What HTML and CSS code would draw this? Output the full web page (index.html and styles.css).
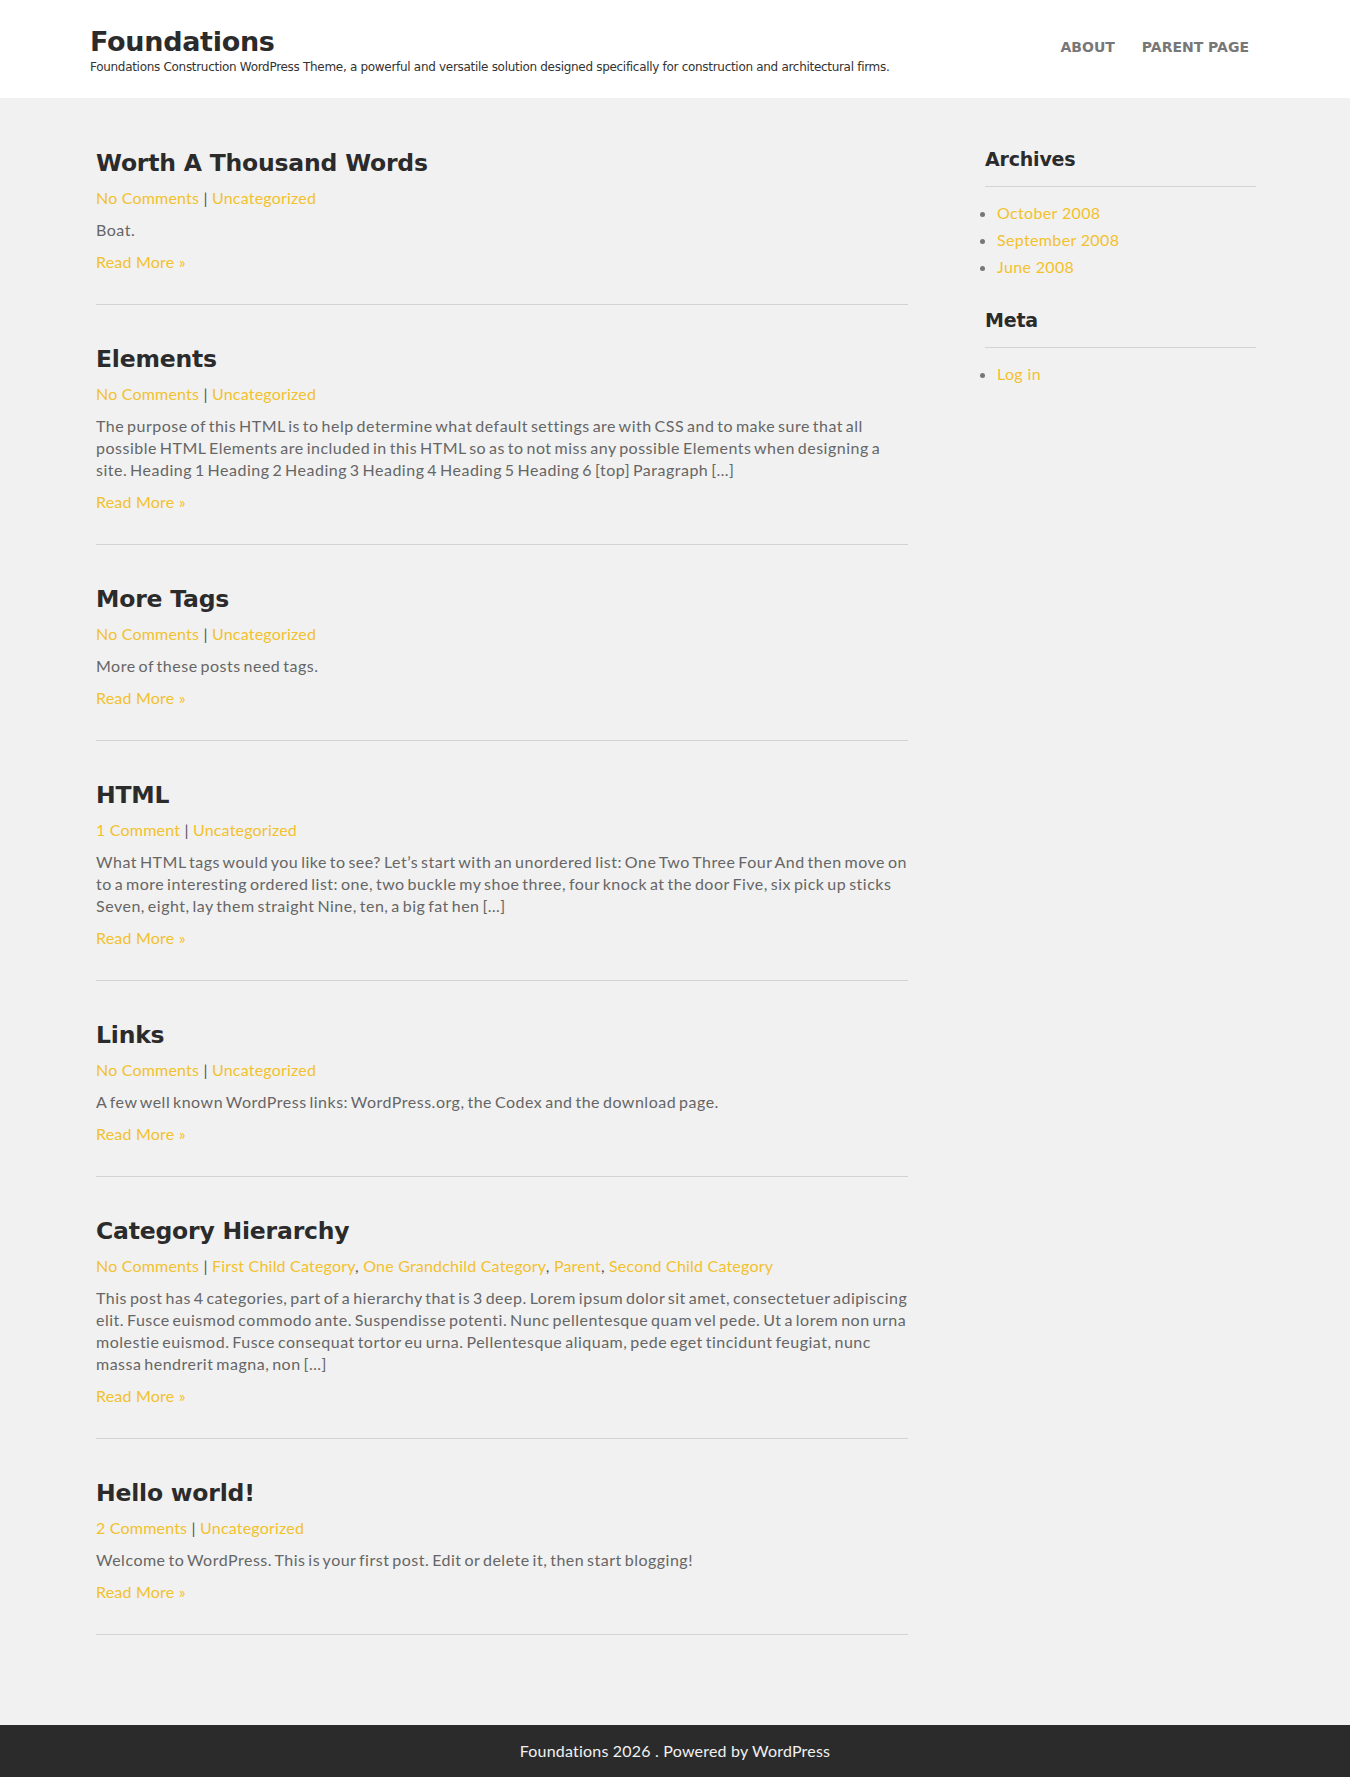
FILE: index.html
```html
<!DOCTYPE html>
<html lang="en">
<head>
<meta charset="utf-8">
<title>Foundations</title>
<link rel="stylesheet" href="styles.css">
</head>
<body>
<header class="site-header">
  <div class="header-inner">
    <div class="branding">
      <div class="site-title">Foundations</div>
      <div class="tagline">Foundations Construction WordPress Theme, a powerful and versatile solution designed specifically for construction and architectural firms.</div>
    </div>
    <nav class="main-nav">
      <a href="#">About</a>
      <a href="#">Parent Page</a>
    </nav>
  </div>
</header>

<div class="site-main">
  <main class="posts">
    <article class="post">
      <h2 class="post-title">Worth A Thousand Words</h2>
      <div class="post-meta"><a href="#">No Comments</a> | <a href="#">Uncategorized</a></div>
      <p class="excerpt">Boat.</p>
      <a class="read-more" href="#">Read More »</a>
    </article>
    <article class="post">
      <h2 class="post-title">Elements</h2>
      <div class="post-meta"><a href="#">No Comments</a> | <a href="#">Uncategorized</a></div>
      <p class="excerpt">The purpose of this HTML is to help determine what default settings are with CSS and to make sure that all possible HTML Elements are included in this HTML so as to not miss any possible Elements when designing a site. Heading 1 Heading 2 Heading 3 Heading 4 Heading 5 Heading 6 [top] Paragraph […]</p>
      <a class="read-more" href="#">Read More »</a>
    </article>
    <article class="post">
      <h2 class="post-title">More Tags</h2>
      <div class="post-meta"><a href="#">No Comments</a> | <a href="#">Uncategorized</a></div>
      <p class="excerpt">More of these posts need tags.</p>
      <a class="read-more" href="#">Read More »</a>
    </article>
    <article class="post">
      <h2 class="post-title">HTML</h2>
      <div class="post-meta"><a href="#">1 Comment</a> | <a href="#">Uncategorized</a></div>
      <p class="excerpt">What HTML tags would you like to see? Let’s start with an unordered list: One Two Three Four And then move on to a more interesting ordered list: one, two buckle my shoe three, four knock at the door Five, six pick up sticks Seven, eight, lay them straight Nine, ten, a big fat hen […]</p>
      <a class="read-more" href="#">Read More »</a>
    </article>
    <article class="post">
      <h2 class="post-title">Links</h2>
      <div class="post-meta"><a href="#">No Comments</a> | <a href="#">Uncategorized</a></div>
      <p class="excerpt">A few well known WordPress links: WordPress.org, the Codex and the download page.</p>
      <a class="read-more" href="#">Read More »</a>
    </article>
    <article class="post">
      <h2 class="post-title">Category Hierarchy</h2>
      <div class="post-meta"><a href="#">No Comments</a> | <a href="#">First Child Category</a>, <a href="#">One Grandchild Category</a>, <a href="#">Parent</a>, <a href="#">Second Child Category</a></div>
      <p class="excerpt">This post has 4 categories, part of a hierarchy that is 3 deep. Lorem ipsum dolor sit amet, consectetuer adipiscing elit. Fusce euismod commodo ante. Suspendisse potenti. Nunc pellentesque quam vel pede. Ut a lorem non urna molestie euismod. Fusce consequat tortor eu urna. Pellentesque aliquam, pede eget tincidunt feugiat, nunc massa hendrerit magna, non […]</p>
      <a class="read-more" href="#">Read More »</a>
    </article>
    <article class="post">
      <h2 class="post-title">Hello world!</h2>
      <div class="post-meta"><a href="#">2 Comments</a> | <a href="#">Uncategorized</a></div>
      <p class="excerpt">Welcome to WordPress. This is your first post. Edit or delete it, then start blogging!</p>
      <a class="read-more" href="#">Read More »</a>
    </article>
  </main>

  <aside class="sidebar">
    <section class="widget">
      <h3 class="widget-title">Archives</h3>
      <ul class="widget-list">
        <li><a href="#">October 2008</a></li>
        <li><a href="#">September 2008</a></li>
        <li><a href="#">June 2008</a></li>
      </ul>
    </section>
    <section class="widget">
      <h3 class="widget-title">Meta</h3>
      <ul class="widget-list">
        <li><a href="#">Log in</a></li>
      </ul>
    </section>
  </aside>
</div>

<footer class="site-footer">Foundations 2026 . Powered by WordPress</footer>
</body>
</html>
```

FILE: styles.css
```css
* { box-sizing: border-box; }

html, body {
  margin: 0;
  padding: 0;
}

body {
  background: #f1f1f1;
  font-family: Lato, "Noto Sans", sans-serif;
  font-size: 16px;
  letter-spacing: 0.2px;
  color: #666;
}

a { text-decoration: none; color: #f2c12e; }

.site-header {
  background: #fff;
  height: 98px;
}

.header-inner {
  width: 1170px;
  margin: 0 auto;
  display: flex;
  justify-content: space-between;
  align-items: flex-start;
  padding-top: 26px;
}

.site-title {
  font-family: "DejaVu Sans", sans-serif;
  font-weight: bold;
  font-size: 27px;
  line-height: 32px;
  color: #2b2b2b;
  letter-spacing: -0.3px;
}

.tagline {
  font-family: "DejaVu Sans", sans-serif;
  font-size: 12px;
  line-height: 16px;
  margin-top: 1px;
  color: #333;
  letter-spacing: -0.3px;
}

.main-nav {
  display: flex;
  gap: 27px;
  padding-top: 11px;
  padding-right: 11px;
}

.main-nav a {
  font-family: "DejaVu Sans", sans-serif;
  font-weight: bold;
  font-size: 14px;
  line-height: 20px;
  letter-spacing: 0;
  text-transform: uppercase;
  color: #777;
}

.site-main {
  width: 1170px;
  margin: 0 auto;
  display: flex;
  gap: 77px;
  padding: 48px 4px 90px 6px;
}

.posts {
  width: 812px;
  flex: none;
}

.post {
  border-bottom: 1px solid #d3d3d3;
  padding-bottom: 31px;
  margin-bottom: 37px;
}

.post:last-child { margin-bottom: 0; }

.post-title {
  margin: 0 0 7px;
  font-family: "DejaVu Sans", sans-serif;
  font-weight: bold;
  font-size: 23.5px;
  line-height: 34px;
  color: #2b2b2b;
  letter-spacing: -0.2px;
}

.post-meta {
  line-height: 22px;
  margin-bottom: 10px;
  color: #555;
}

.excerpt {
  margin: 0 0 10px;
  line-height: 22px;
  letter-spacing: 0.5px;
  word-spacing: -1.7px;
}

.read-more {
  display: block;
  line-height: 22px;
}

.sidebar {
  width: 271px;
  flex: none;
}

.widget-title {
  margin: 0;
  font-family: "DejaVu Sans", sans-serif;
  font-weight: bold;
  font-size: 19px;
  line-height: 26px;
  color: #2b2b2b;
  padding-bottom: 14px;
  border-bottom: 1px solid #d3d3d3;
  letter-spacing: -0.2px;
}

.widget + .widget { margin-top: 27px; }

.widget-list {
  margin: 12px 0 0;
  padding-left: 12px;
  color: #777;
}

.widget-list li {
  line-height: 27px;
  letter-spacing: 0.35px;
}

.site-footer {
  background: #2b2b2b;
  color: #f1f1f1;
  text-align: center;
  height: 52px;
  line-height: 52px;
}
```
